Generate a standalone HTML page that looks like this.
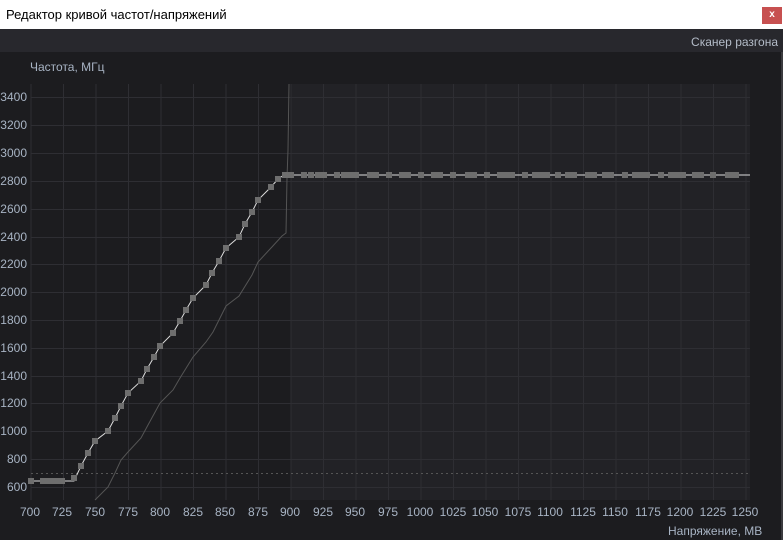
<!DOCTYPE html>
<html><head><meta charset="utf-8"><style>
body{margin:0;width:783px;height:540px;overflow:hidden;background:#1c1c1f;font-family:"Liberation Sans",sans-serif;position:relative}
.t{position:absolute;left:0;top:0;width:783px;height:29px;background:#fff}
.t span{position:absolute;left:6px;top:7px;font-size:13px;color:#000}
.x{position:absolute;left:762px;top:7px;width:20px;height:17px;background:#c75050;color:#fff;font-size:10px;text-align:center;line-height:16px;font-weight:bold}
.tb{position:absolute;left:0;top:29px;width:783px;height:23px;background:#28282d}
.tb span{position:absolute;right:5px;top:6px;font-size:12px;color:#b4bcc8}
.l{position:absolute;font-size:12px;color:#a8b4c4}
</style></head><body>
<div class="t"><span>Редактор кривой частот/напряжений</span><div class="x">x</div></div>
<div class="tb"><span>Сканер разгона</span></div>
<div class="l" style="left:30px;top:60px">Частота, МГц</div>
<div class="l" style="left:668px;top:524px">Напряжение, МВ</div>
<svg width="783" height="540" style="position:absolute;left:0;top:0" font-family="Liberation Sans" font-size="12" fill="#a8b4c4">
<rect x="291" y="84" width="459" height="416" fill="#222226"/>
<g stroke="#2e2e33" stroke-width="1">
<path d="M31 84V500M63.5 84V500M96 84V500M128.5 84V500M161 84V500M193.5 84V500M226 84V500M258.5 84V500M291 84V500M323.5 84V500M356 84V500M388.5 84V500M421 84V500M453.5 84V500M486 84V500M518.5 84V500M551 84V500M583.5 84V500M616 84V500M648.5 84V500M681 84V500M713.5 84V500M746 84V500"/>
<path d="M31 97.5H750M31 125.5H750M31 153.5H750M31 181.5H750M31 209.5H750M31 237.5H750M31 264.5H750M31 292.5H750M31 320.5H750M31 348.5H750M31 376.5H750M31 403.5H750M31 431.5H750M31 459.5H750M31 487.5H750"/>
</g>
<path d="M31 473.5H750" stroke="#555" stroke-dasharray="2,3"/>
<g text-anchor="end">
<text x="27" y="101">3400</text><text x="27" y="129">3200</text><text x="27" y="157">3000</text><text x="27" y="185">2800</text><text x="27" y="213">2600</text><text x="27" y="241">2400</text><text x="27" y="268">2200</text><text x="27" y="296">2000</text><text x="27" y="324">1800</text><text x="27" y="352">1600</text><text x="27" y="380">1400</text><text x="27" y="407">1200</text><text x="27" y="435">1000</text><text x="27" y="463">800</text><text x="27" y="491">600</text>
</g>
<g text-anchor="middle">
<text x="30" y="516">700</text><text x="62" y="516">725</text><text x="95" y="516">750</text><text x="128" y="516">775</text><text x="160" y="516">800</text><text x="193" y="516">825</text><text x="225" y="516">850</text><text x="258" y="516">875</text><text x="290" y="516">900</text><text x="323" y="516">925</text><text x="355" y="516">950</text><text x="388" y="516">975</text><text x="420" y="516">1000</text><text x="453" y="516">1025</text><text x="485" y="516">1050</text><text x="518" y="516">1075</text><text x="550" y="516">1100</text><text x="583" y="516">1125</text><text x="615" y="516">1150</text><text x="648" y="516">1175</text><text x="680" y="516">1200</text><text x="713" y="516">1225</text><text x="745" y="516">1250</text>
</g>
<path d="M95 500L108 487L115 473L121 460L128 452L141 438L148 425L160 403L173 390L180 378L193 357L206 342L213 332L226 306L239 296L252 275L258 262L271 248L282 236L286 233L287 178L288 150L289 84" fill="none" stroke="#555" stroke-width="1"/>
<path d="M31 481L74 481L81 466L88 453L95 441L108 431L115 418L121 406L128 393L141 381L147 369L154 357L160 346L173 333L180 321L186 310L193 298L206 285L212 273L219 261L226 248L239 237L245 224L252 212L258 200L271 187L278 179L284 175L750 175" fill="none" stroke="#ddd" stroke-width="1"/>
<g fill="#6e6e6e">
<rect x="28" y="478" width="6" height="6"/><rect x="40" y="478" width="13" height="6"/><rect x="53" y="478" width="12" height="6"/><rect x="71" y="475" width="6" height="6"/><rect x="78" y="463" width="6" height="6"/><rect x="85" y="450" width="6" height="6"/><rect x="92" y="438" width="6" height="6"/><rect x="105" y="428" width="6" height="6"/><rect x="112" y="415" width="6" height="6"/><rect x="118" y="403" width="6" height="6"/><rect x="125" y="390" width="6" height="6"/><rect x="138" y="378" width="6" height="6"/><rect x="144" y="366" width="6" height="6"/><rect x="151" y="354" width="6" height="6"/><rect x="157" y="343" width="6" height="6"/><rect x="170" y="330" width="6" height="6"/><rect x="177" y="318" width="6" height="6"/><rect x="183" y="307" width="6" height="6"/><rect x="190" y="295" width="6" height="6"/><rect x="203" y="282" width="6" height="6"/><rect x="209" y="270" width="6" height="6"/><rect x="216" y="258" width="6" height="6"/><rect x="223" y="245" width="6" height="6"/><rect x="236" y="234" width="6" height="6"/><rect x="242" y="221" width="6" height="6"/><rect x="249" y="209" width="6" height="6"/><rect x="255" y="197" width="6" height="6"/><rect x="268" y="184" width="6" height="6"/><rect x="275" y="176" width="6" height="6"/>
<rect x="282" y="172" width="12" height="6"/><rect x="301" y="172" width="6" height="6"/><rect x="308" y="172" width="6" height="6"/><rect x="315" y="172" width="12" height="6"/><rect x="334" y="172" width="6" height="6"/><rect x="341" y="172" width="18" height="6"/><rect x="367" y="172" width="12" height="6"/><rect x="386" y="172" width="6" height="6"/><rect x="399" y="172" width="12" height="6"/><rect x="418" y="172" width="6" height="6"/><rect x="431" y="172" width="12" height="6"/><rect x="450" y="172" width="6" height="6"/><rect x="465" y="172" width="12" height="6"/><rect x="484" y="172" width="6" height="6"/><rect x="497" y="172" width="18" height="6"/><rect x="522" y="172" width="6" height="6"/><rect x="532" y="172" width="18" height="6"/><rect x="555" y="172" width="6" height="6"/><rect x="565" y="172" width="12" height="6"/><rect x="585" y="172" width="12" height="6"/><rect x="602" y="172" width="12" height="6"/><rect x="622" y="172" width="6" height="6"/><rect x="632" y="172" width="18" height="6"/><rect x="658" y="172" width="6" height="6"/><rect x="668" y="172" width="18" height="6"/><rect x="692" y="172" width="12" height="6"/><rect x="710" y="172" width="6" height="6"/><rect x="725" y="172" width="14" height="6"/>
</g>
<rect x="781" y="52" width="2" height="488" fill="#3a3a3e"/>
</svg>
</body></html>
